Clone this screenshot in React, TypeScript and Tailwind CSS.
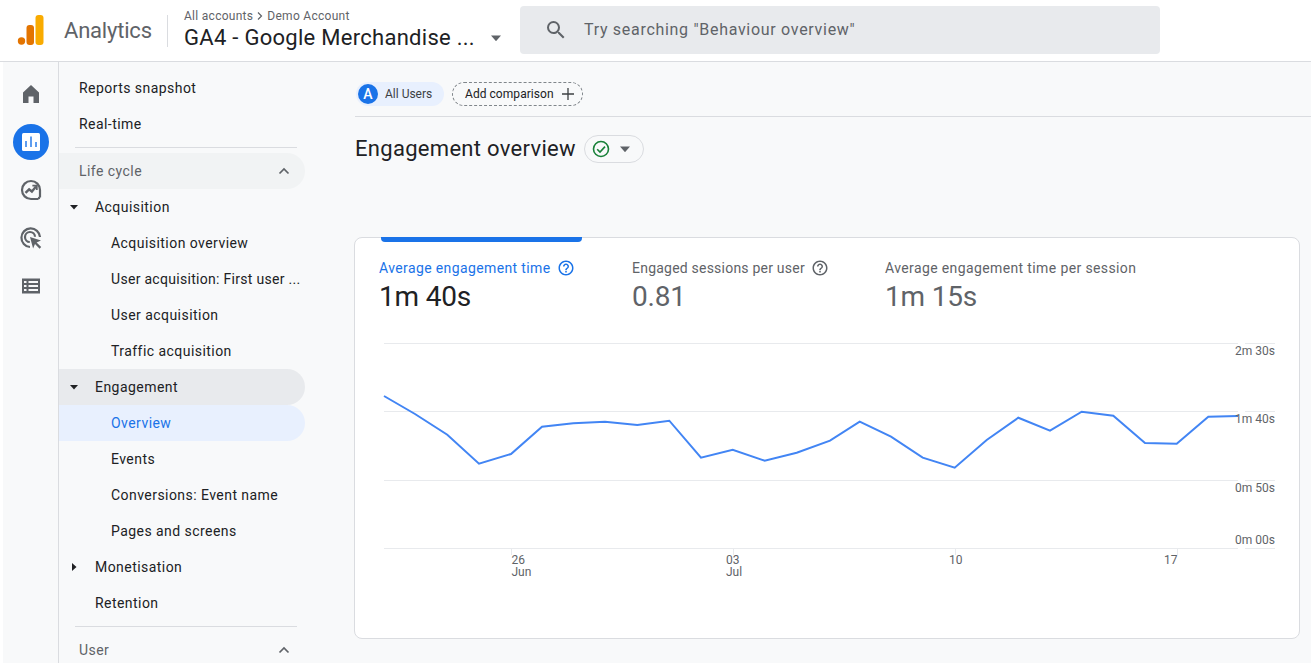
import React from "react";

function Tri({ dir = "down", className = "" }: { dir?: "down" | "right"; className?: string }) {
  return (
    <svg width="10" height="10" viewBox="0 0 10 10" className={className}>
      {dir === "down" ? <path d="M1 3h8L5 7.5z" fill="currentColor" /> : <path d="M3 1v8l4.5-4z" fill="currentColor" />}
    </svg>
  );
}

function Chevron() {
  return (
    <svg width="14" height="14" viewBox="0 0 14 14" className="text-[#5f6368]">
      <path d="M2.5 9.5 7 5l4.5 4.5" fill="none" stroke="currentColor" strokeWidth="1.7" />
    </svg>
  );
}

function Help({ color }: { color: string }) {
  return (
    <svg width="18" height="18" viewBox="0 0 24 24" style={{ color }}>
      <path
        fill="currentColor"
        d="M11 18h2v-2h-2v2zm1-16C6.48 2 2 6.48 2 12s4.48 10 10 10 10-4.48 10-10S17.52 2 12 2zm0 18c-4.41 0-8-3.59-8-8s3.59-8 8-8 8 3.59 8 8-3.59 8-8 8zm0-14c-2.21 0-4 1.79-4 4h2c0-1.1.9-2 2-2s2 .9 2 2c0 2-3 1.75-3 5h2c0-2.25 3-2.5 3-5 0-2.21-1.79-4-4-4z"
      />
    </svg>
  );
}

function Rail() {
  return (
    <div className="ml-[3px] w-[56px] shrink-0 bg-[#f8f9fa] border-r border-[#dadce0] flex flex-col items-center pt-[8px]">
      <div className="h-12 w-12 flex items-center justify-center">
        <svg width="24" height="24" viewBox="0 0 24 24" fill="#5f6368">
          <path d="M4 21V10.5L12 3l8 7.5V21h-5.5v-6.5h-5V21z" />
        </svg>
      </div>
      <div className="h-12 w-12 flex items-center justify-center">
        <div className="h-9 w-9 rounded-full bg-[#1a73e8] flex items-center justify-center">
          <svg width="20" height="20" viewBox="0 0 20 20">
            <rect x="1" y="1" width="18" height="18" rx="1.5" fill="#fff" />
            <path d="M4.3 9h1.4v6H4.3zM9.3 4.5h1.4V15H9.3zM14.3 10h1.4v5h-1.4z" fill="#1a73e8" />
          </svg>
        </div>
      </div>
      <div className="h-12 w-12 flex items-center justify-center">
        <svg width="24" height="24" viewBox="0 0 24 24" fill="none" stroke="#5f6368" strokeWidth="2.2">
          <path d="M21 19.5V12a9 9 0 1 0-9 9h7.5" />
          <path d="M6.5 14.8l3.6-3.5 2.8 2.2L17 8.6" strokeWidth="2.4" />
          <path d="M13.4 7.6h4.4V12" strokeWidth="1.8" />
          <circle cx="20" cy="20" r="1.2" fill="#5f6368" stroke="none" />
        </svg>
      </div>
      <div className="h-12 w-12 flex items-center justify-center">
        <svg width="24" height="24" viewBox="0 0 24 24" fill="none" stroke="#5f6368" strokeWidth="2.2">
          <path d="M11 21A9.3 9.3 0 1 1 21 11" />
          <path d="M10.8 16A5 5 0 1 1 16 10.8" />
          <path d="M11 11l11 3.6-4.4 1.9 4.6 4.6-1.6 1.6-4.6-4.6-1.9 4.4z" fill="#5f6368" stroke="none" />
        </svg>
      </div>
      <div className="h-12 w-12 flex items-center justify-center">
        <svg width="24" height="24" viewBox="0 0 24 24" fill="#5f6368">
          <path d="M3 4.5h18v15H3zM5 7v2h2.5V7zm4.5 0v2H19V7zM5 11v2h2.5v-2zm4.5 0v2H19v-2zM5 15v2h2.5v-2zm4.5 0v2H19v-2z" fillRule="evenodd" />
        </svg>
      </div>
    </div>
  );
}

function Item({
  label,
  indent = 20,
  tri,
  hover,
  active,
  tight,
}: {
  label: string;
  indent?: 20 | 36 | 52;
  tri?: "down" | "right";
  hover?: boolean;
  active?: boolean;
  tight?: boolean;
}) {
  const pad = indent === 20 ? "pl-5" : indent === 36 ? "pl-9" : "pl-[52px]";
  return (
    <div
      className={`relative h-9 w-[246px] flex items-center rounded-r-full text-sm whitespace-nowrap ${
        tight ? "tracking-[0.3px]" : "tracking-[0.45px]"
      } ${pad} ${active ? "bg-[#e8f0fe] text-[#1a73e8]" : hover ? "bg-[#e8eaed] text-[#202124]" : "text-[#202124]"}`}
    >
      {tri && (
        <span className="absolute left-[10px] top-[13px] text-[#202124]">
          <Tri dir={tri} />
        </span>
      )}
      {label}
    </div>
  );
}

function Section({ label, shade }: { label: string; shade?: boolean }) {
  return (
    <div
      className={`h-9 w-[246px] flex items-center justify-between pl-5 pr-[14px] rounded-r-full text-sm tracking-[0.45px] text-[#5f6368] ${
        shade ? "bg-[#f1f3f4]" : ""
      }`}
    >
      {label}
      <Chevron />
    </div>
  );
}

function Divider() {
  return <div className="ml-4 my-[5px] w-[222px] h-px bg-[#dadce0]" />;
}

function Sidebar() {
  return (
    <div className="w-[296px] shrink-0 pt-2 overflow-hidden">
      <Item label="Reports snapshot" />
      <Item label="Real-time" />
      <Divider />
      <Section label="Life cycle" shade />
      <Item label="Acquisition" indent={36} tri="down" />
      <Item label="Acquisition overview" indent={52} />
      <Item label="User acquisition: First user ..." indent={52} tight />
      <Item label="User acquisition" indent={52} />
      <Item label="Traffic acquisition" indent={52} />
      <Item label="Engagement" indent={36} tri="down" hover />
      <Item label="Overview" indent={52} active />
      <Item label="Events" indent={52} />
      <Item label="Conversions: Event name" indent={52} />
      <Item label="Pages and screens" indent={52} />
      <Item label="Monetisation" indent={36} tri="right" />
      <Item label="Retention" indent={36} />
      <Divider />
      <Section label="User" />
    </div>
  );
}

const pts =
  "384,396 415,414 447.3,434.7 479,463.7 511,454 542,426.7 573.3,423.3 605,421.7 637.3,425 669.3,420.7 701,457.7 732.7,449.7 764.7,460.7 796.7,452.7 830,440.7 859.7,421.7 891,436.7 922.7,457.7 954.7,467.7 986.7,440 1018.3,417.7 1050,430.7 1081.7,411.7 1113.3,415.7 1145,443 1176.7,443.7 1208.3,416.7 1238,416";

function Chart() {
  const ox = 355;
  const oy = 330;
  const grid = [343.5, 411.5, 480.5, 548.5];
  const ylabels: [string, number][] = [
    ["2m 30s", 355],
    ["1m 40s", 423],
    ["0m 50s", 492],
    ["0m 00s", 544],
  ];
  const ticks = [511.5, 733.5, 955.5, 1177.5];
  return (
    <svg width="945" height="260" viewBox={`${ox} ${oy} 945 260`} className="block" style={{ fontFamily: "Roboto, sans-serif" }}>
      {grid.map((y) => (
        <g key={y} stroke="#e8eaed" strokeWidth="1">
          <line x1="384" x2="1238" y1={y} y2={y} />
          <line x1="1245" x2="1275" y1={y} y2={y} />
        </g>
      ))}
      {ticks.map((x) => (
        <line key={x} x1={x} x2={x} y1="548" y2="555" stroke="#e8eaed" />
      ))}
      <polyline points={pts} fill="none" stroke="#4285f4" strokeWidth="2" />
      <g fontSize="12" fill="#5f6368">
        {ylabels.map(([t, y]) => (
          <text key={t} x="1275" y={y} textAnchor="end">
            {t}
          </text>
        ))}
        <text x="511.5" y="564">26</text>
        <text x="511.5" y="576">Jun</text>
        <text x="726" y="564">03</text>
        <text x="726" y="576">Jul</text>
        <text x="949" y="564">10</text>
        <text x="1164" y="564">17</text>
      </g>
    </svg>
  );
}

function Metric({
  label,
  value,
  help,
  active,
  tight,
}: {
  label: string;
  value: string;
  help?: boolean;
  active?: boolean;
  tight?: boolean;
}) {
  return (
    <div className="w-[253px] shrink-0">
      <div
        className={`h-[18px] flex items-center gap-[6px] text-sm whitespace-nowrap ${tight ? "tracking-[0.22px]" : "tracking-[0.38px]"} ${
          active ? "text-[#1a73e8]" : "text-[#5f6368]"
        }`}
      >
        {label}
        {help && <Help color={active ? "#1a73e8" : "#5f6368"} />}
      </div>
      <div className={`mt-[2px] text-[28px] leading-9 tracking-[-0.2px] ${active ? "text-[#202124]" : "text-[#5f6368]"}`}>{value}</div>
    </div>
  );
}

export default function App() {
  return (
    <div className="h-[663px] w-[1311px] overflow-hidden bg-white flex flex-col" style={{ fontFamily: "Roboto, 'Liberation Sans', sans-serif" }}>
      <header className="h-[62px] shrink-0 bg-white border-b border-[#dadce0] flex items-center">
        <svg width="28" height="32" viewBox="0 0 28 32" className="ml-[17px] mt-[-1px]">
          <rect x="18.5" y="1" width="8" height="30" rx="3" fill="#f9ab00" />
          <rect x="9.5" y="11" width="7.5" height="20" rx="3" fill="#e37400" />
          <circle cx="4.5" cy="27" r="3.7" fill="#e37400" />
        </svg>
        <div className="ml-[19px] text-[22px] text-[#5f6368] tracking-[-0.2px] w-[103px]">Analytics</div>
        <div className="h-8 w-px bg-[#dadce0]" />
        <div className="ml-4 w-[320px] shrink-0 mt-[-1px]">
          <div className="flex items-center text-xs text-[#5f6368] tracking-[0.28px] leading-4">
            All accounts
            <svg width="12" height="12" viewBox="0 0 12 12" className="mx-[1px]">
              <path d="M4 2.5 7.5 6 4 9.5" fill="none" stroke="#5f6368" strokeWidth="1.2" />
            </svg>
            Demo Account
          </div>
          <div className="flex items-center text-[22px] leading-7 tracking-[0.28px] text-[#202124] whitespace-nowrap">
            GA4 - Google Merchandise ...
            <Tri className="ml-[16px] text-[#5f6368] scale-125" />
          </div>
        </div>
        <div className="ml-4 h-12 w-[640px] rounded bg-[#e8eaed] flex items-center pl-6 text-base text-[#5f6368] tracking-[0.7px] mt-[-1px]">
          <svg width="24" height="24" viewBox="0 0 24 24" fill="#5f6368" className="mr-4">
            <path d="M15.5 14h-.79l-.28-.27A6.47 6.47 0 0 0 16 9.5 6.5 6.5 0 1 0 9.5 16c1.61 0 3.09-.59 4.23-1.57l.27.28v.79l5 4.99L20.49 19l-4.99-5zm-6 0C7.01 14 5 11.99 5 9.5S7.01 5 9.5 5 14 7.01 14 9.5 11.99 14 9.5 14z" />
          </svg>
          Try searching "Behaviour overview"
        </div>
      </header>
      <div className="flex-1 flex min-h-0">
        <Rail />
        <div className="flex-1 bg-[#f8f9fa] flex min-w-0">
          <Sidebar />
          <main className="flex-1 min-w-0">
            <div className="h-[55px] border-b border-[#dadce0] flex items-start pt-5 pl-px gap-2">
              <div className="h-6 w-[88px] rounded-full bg-[#e8f0fe] flex items-center text-xs text-[#3c4043]">
                <span className="h-5 w-5 ml-[2px] rounded-full bg-[#1a73e8] text-white text-[14px] font-medium flex items-center justify-center">A</span>
                <span className="ml-[7px]">All Users</span>
              </div>
              <div className="h-6 w-[131px] rounded-full border border-dashed border-[#80868b] flex items-center pl-[12px] text-xs tracking-[0.05px] text-[#202124] whitespace-nowrap">
                Add comparison
                <svg width="14" height="14" viewBox="0 0 14 14" className="ml-[7px]">
                  <path d="M7 1v12M1 7h12" stroke="#3c4043" strokeWidth="1.3" />
                </svg>
              </div>
            </div>
            <div className="h-[120px] flex items-start pt-[18px]">
              <h1 className="text-[22px] leading-7 tracking-[0.3px] text-[#202124] whitespace-nowrap">Engagement overview</h1>
              <div className="ml-2 h-7 w-[60px] rounded-full border border-[#dadce0] flex items-center pl-[7px]">
                <svg width="18" height="18" viewBox="0 0 18 18">
                  <circle cx="9" cy="9" r="7.5" fill="none" stroke="#188038" strokeWidth="1.6" />
                  <path d="M5.2 9.2 8 12l5-5.4" fill="none" stroke="#188038" strokeWidth="1.6" />
                </svg>
                <Tri className="ml-[10px] text-[#5f6368] scale-125" />
              </div>
            </div>
            <section className="relative ml-[-1px] h-[402px] w-[946px] rounded-lg border border-[#dadce0] bg-white">
              <div className="absolute left-[26px] top-[-1px] h-[5px] w-[201px] rounded-b bg-[#1a73e8]" />
              <div className="flex pl-[24px] pt-[21px]">
                <Metric label="Average engagement time" value="1m 40s" help active />
                <Metric label="Engaged sessions per user" value="0.81" help tight />
                <Metric label="Average engagement time per session" value="1m 15s" />
              </div>
              <div className="mt-[15px]">
                <Chart />
              </div>
            </section>
          </main>
        </div>
      </div>
    </div>
  );
}
